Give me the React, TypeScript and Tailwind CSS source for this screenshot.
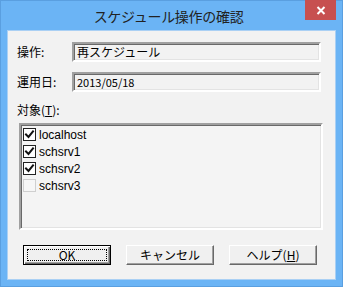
import React from "react";

function Check({ checked }: { checked: boolean }) {
  return (
    <div
      className={
        "w-[13px] h-[13px] flex items-center justify-center " +
        (checked ? "border border-[#222] bg-white" : "border border-[#cfcfcf] bg-[#f6f6f6]")
      }
    >
      {checked && (
        <svg width="11" height="11" viewBox="0 0 11 11">
          <path d="M2 5.5 L4.5 8 L9 2.5" stroke="#111" strokeWidth="2" fill="none" strokeLinecap="square" />
        </svg>
      )}
    </div>
  );
}

function Field({ children, narrow }: { children: React.ReactNode; narrow?: boolean }) {
  return (
    <div className="flex-1 h-[20px] bg-[#f2f2f2] border-2 border-t-[#a0a0a0] border-l-[#a0a0a0] border-b-white border-r-white shadow-[inset_1px_1px_0_#696969,inset_-1px_-1px_0_#e3e3e3] flex items-center pl-[3px]">
      <span className={narrow ? "text-[11px] leading-none text-black" : "text-[12px] leading-none text-black"}>{children}</span>
    </div>
  );
}

function Btn({ children, def }: { children: React.ReactNode; def?: boolean }) {
  return (
    <div
      className={
        "h-[20px] w-[88px] flex items-center justify-center bg-[#f0f0f0] relative " +
        (def
          ? "border border-black shadow-[inset_1px_1px_0_#fff,inset_-1px_-1px_0_#696969,inset_-2px_-2px_0_#a0a0a0]"
          : "border border-t-white border-l-white border-b-[#696969] border-r-[#696969] shadow-[inset_-1px_-1px_0_#a0a0a0]")
      }
    >
      {def && <div className="absolute left-[3px] top-[3px] right-[3px] bottom-[3px] border border-dotted border-black" />}
      <span className="text-[12px] leading-none text-black">{children}</span>
    </div>
  );
}

export default function App() {
  const items: [string, boolean][] = [
    ["localhost", true],
    ["schsrv1", true],
    ["schsrv2", true],
    ["schsrv3", false],
  ];
  return (
    <div className="w-[343px] h-[287px] bg-[#6bb4f5] border border-[#5a9fe0] flex flex-col font-['Liberation_Sans','Noto_Sans_CJK_JP',sans-serif]">
      <div className="h-[29px] relative flex items-center justify-center">
        <span className="text-[14px] leading-none text-[#222] font-['Noto_Sans_CJK_JP',sans-serif] -ml-[6px] tracking-[-0.3px]">
          スケジュール操作の確認
        </span>
        <div className="absolute right-[6px] top-[-1px] w-[31px] h-[20px] bg-[#c75050] flex items-center justify-center">
          <svg width="10" height="9" viewBox="0 0 10 9">
            <path d="M1.5 1 L8.5 8 M8.5 1 L1.5 8" stroke="#fff" strokeWidth="2" />
          </svg>
        </div>
      </div>
      <div className="flex-1 mx-[6px] mb-[6px] bg-[#f2f2f2] border border-[#aad0f4] flex flex-col pl-[9px] pr-[14px] font-['Noto_Sans_CJK_JP',sans-serif]">
        <div className="flex items-center mt-[11px]">
          <span className="w-[55px] text-[12px] leading-none text-black">操作:</span>
          <Field>再スケジュール</Field>
        </div>
        <div className="flex items-center mt-[10px]">
          <span className="w-[55px] text-[12px] leading-none text-black">運用日:</span>
          <Field narrow>2013/05/18</Field>
        </div>
        <div className="mt-[12px] text-[12px] leading-none text-black">
          対象(<span className="underline">T</span>):
        </div>
        <div className="mt-[7px] ml-[2px] mr-[-2px] h-[107px] bg-[#f4f4f4] border-2 border-t-[#a0a0a0] border-l-[#a0a0a0] border-b-white border-r-white shadow-[inset_1px_1px_0_#696969,inset_-1px_-1px_0_#e3e3e3] flex flex-col pt-[1px]">
          {items.map(([name, c]) => (
            <div key={name} className="h-[17px] flex items-center pl-[2px] gap-[3px]">
              <Check checked={c} />
              <span className="text-[12px] leading-none text-black font-['Liberation_Sans',sans-serif]">{name}</span>
            </div>
          ))}
        </div>
        <div className="mt-[15px] ml-[6px] flex gap-[15px]">
          <Btn def>OK</Btn>
          <Btn>キャンセル</Btn>
          <Btn>
            ヘルプ(<span className="underline">H</span>)
          </Btn>
        </div>
      </div>
    </div>
  );
}
